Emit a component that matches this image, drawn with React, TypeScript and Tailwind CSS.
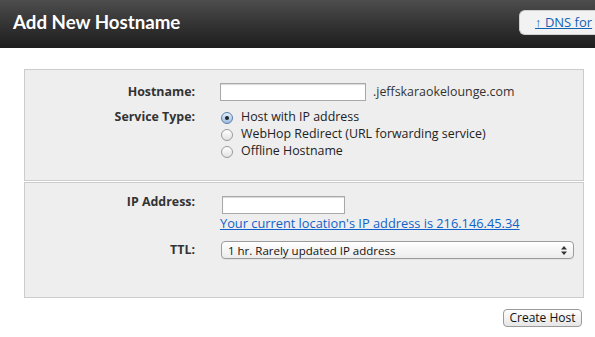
import React, { useState } from 'react';

const Radio = ({ checked }: { checked: boolean }) => (
  <span
    className={`w-[12px] h-[12px] rounded-full border shrink-0 flex items-center justify-center ${
      checked
        ? 'border-[#5a7ea8] bg-gradient-to-b from-[#e4eefa] to-[#9fbde0]'
        : 'border-[#9a9a9a] bg-gradient-to-b from-[#ffffff] to-[#e2e2e2]'
    }`}
  >
    {checked && <span className="w-[4px] h-[4px] rounded-full bg-[#1c2530]" />}
  </span>
);

const serviceTypes = [
  'Host with IP address',
  'WebHop Redirect (URL forwarding service)',
  'Offline Hostname',
];

export default function App() {
  const [service, setService] = useState(0);

  return (
    <div className="w-[595px] h-[337px] bg-white overflow-hidden font-['Open_Sans',sans-serif] text-[12.4px] text-[#222]">
      {/* Header */}
      <div className="h-12 bg-gradient-to-b from-[#4d4d4d] to-[#1d1d1d] flex items-start justify-between">
        <h1 className="pl-[13px] pt-[11px] font-['Lato',sans-serif] font-bold text-[18.7px] leading-[22px] text-white">
          Add New Hostname
        </h1>
        <div className="mt-[10px] h-[25px] w-[76px] rounded-l-[6px] bg-[#f2f2f2] border border-r-0 border-[#d0d0d0] flex items-center pl-[15px]">
          <a className="text-[13px] text-[#1262b3] underline whitespace-nowrap leading-none">↑ DNS for</a>
        </div>
      </div>

      <div className="pl-[24px] pr-[11px] pt-[21px]">
        {/* Panel 1 */}
        <div className="h-[112px] border border-[#cccccc] bg-[#eeeeee] pt-[13px]">
          <div className="flex items-center h-[18px]">
            <div className="w-[170px] text-right font-bold text-[#333]">Hostname:</div>
            <input
              className="ml-[25px] w-[146px] h-[18px] bg-white border border-[#a8a8a8] shadow-[inset_0_1px_1px_rgba(0,0,0,0.15)] outline-none"
              type="text"
            />
            <span className="ml-[7px] text-[#333]">.jeffskaraokelounge.com</span>
          </div>
          <div className="flex mt-[7px]">
            <div className="w-[170px] text-right font-bold text-[#333] leading-[17px]">Service Type:</div>
            <div className="ml-[26px] flex flex-col">
              {serviceTypes.map((t, i) => (
                <label
                  key={t}
                  className="flex items-center h-[17px] leading-[17px] cursor-pointer"
                  onClick={() => setService(i)}
                >
                  <span className="mt-[3px]">
                    <Radio checked={service === i} />
                  </span>
                  <span className="ml-[8px] text-[#222]">{t}</span>
                </label>
              ))}
            </div>
          </div>
        </div>

        {/* Panel 2 */}
        <div className="mt-[1px] h-[116px] border border-[#cccccc] bg-[#eeeeee] pt-[10px]">
          <div className="flex">
            <div className="w-[170px] text-right font-bold text-[#333] leading-[17px]">IP Address:</div>
            <div className="ml-[25px] flex flex-col">
              <input
                className="ml-[2px] mt-[3px] w-[123px] h-[18px] bg-white border border-[#a8a8a8] shadow-[inset_0_1px_1px_rgba(0,0,0,0.15)] outline-none"
                type="text"
              />
              <a className="mt-[1px] leading-[17px] text-[12.8px] text-[#1262c9] underline whitespace-nowrap">
                Your current location's IP address is 216.146.45.34
              </a>
            </div>
          </div>
          <div className="flex items-center mt-[9px]">
            <div className="w-[170px] text-right font-bold text-[#333]">TTL:</div>
            <div className="ml-[26px] w-[353px] h-[18px] rounded-[4px] border border-[#9c9c9c] bg-gradient-to-b from-[#ffffff] to-[#ececec] shadow-[0_1px_0_rgba(0,0,0,0.05)] flex items-center justify-between pl-[6px] pr-[6px]">
              <span className="text-[11.5px] text-[#111] leading-none">1 hr. Rarely updated IP address</span>
              <svg width="6" height="9" viewBox="0 0 6 9">
                <path d="M3 0L6 3.5H0Z" fill="#333" />
                <path d="M3 9L6 5.5H0Z" fill="#333" />
              </svg>
            </div>
          </div>
        </div>

        <div className="flex justify-end mt-[11px] pr-[2px]">
          <button className="h-[18px] w-[79px] rounded-[4px] border border-[#9a9a9a] bg-gradient-to-b from-[#ffffff] to-[#e6e6e6] text-[12px] text-[#111] leading-none">
            Create Host
          </button>
        </div>
      </div>
    </div>
  );
}
